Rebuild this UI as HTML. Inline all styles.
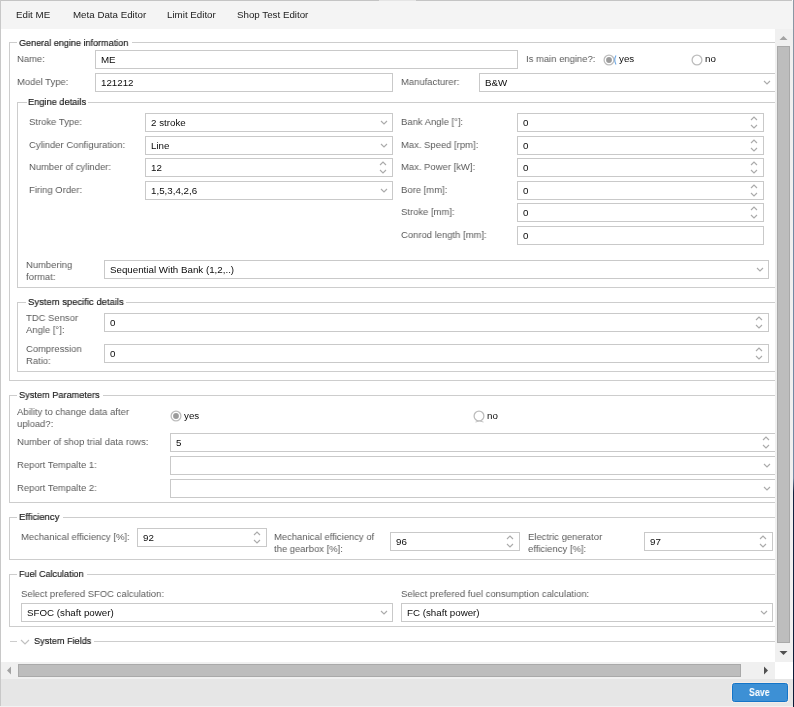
<!DOCTYPE html>
<html><head><meta charset="utf-8"><style>
html,body{margin:0;padding:0;width:794px;height:707px;overflow:hidden;background:#fff}
body{position:relative;font-family:"Liberation Sans",sans-serif;-webkit-font-smoothing:antialiased}
body>div,body>svg{position:absolute;box-sizing:border-box}
.t{white-space:nowrap;line-height:12px;transform-origin:0 0;will-change:transform;font-variant-ligatures:none}
</style></head><body>
<div style="left:0px;top:0px;width:794px;height:707px;background:#ffffff"></div>
<div style="left:0px;top:0px;width:792px;height:1px;background:#c4c4c4"></div>
<div style="left:379px;top:0px;width:37px;height:1px;background:#e4e4e4"></div>
<div style="left:0px;top:0px;width:1px;height:707px;background:#c8c8c8"></div>
<div style="left:793px;top:0px;width:1px;height:707px;background:linear-gradient(#8c98a4 0px,#7389a4 200px,#7389a4 478px,#12223f 492px,#0c1a36 707px)"></div>
<div style="left:1px;top:1px;width:792px;height:28px;background:#f4f4f4"></div>
<div class="t" style="left:16px;top:9.12px;color:#222;font-size:9.75px;font-weight:normal">Edit ME</div>
<div class="t" style="left:72.8px;top:9.12px;color:#222;font-size:9.75px;font-weight:normal">Meta Data Editor</div>
<div class="t" style="left:166.5px;top:9.12px;color:#222;font-size:9.75px;font-weight:normal">Limit Editor</div>
<div class="t" style="left:236.5px;top:9.12px;color:#222;font-size:9.75px;font-weight:normal">Shop Test Editor</div>
<div style="left:9px;top:42px;width:8px;height:1px;background:#cdcdcd"></div>
<div style="left:132px;top:42px;width:643px;height:1px;background:#cdcdcd"></div>
<div style="left:9px;top:42px;width:1px;height:339px;background:#cdcdcd"></div>
<div style="left:9px;top:380px;width:766px;height:1px;background:#cdcdcd"></div>
<div class="t" style="left:18.5px;top:36.62px;color:#1c1c1c;font-size:9.75px;font-weight:normal;transform:scaleX(0.929);-webkit-text-stroke:0.18px #1c1c1c">General engine information</div>
<div class="t" style="left:17px;top:52.62px;color:#5a5a5a;font-size:9.75px;font-weight:normal;transform:scaleX(0.97)">Name:</div>
<div style="left:95px;top:50px;width:423px;height:19px;border:1px solid #c9c9c9;background:#fff;"></div>
<div class="t" style="left:100.7px;top:53.62px;color:#0c0c0c;font-size:9.75px;font-weight:normal">ME</div>
<div class="t" style="left:526px;top:52.62px;color:#5a5a5a;font-size:9.75px;font-weight:normal;transform:scaleX(0.97)">Is main engine?:</div>
<svg style="left:602px;top:52.5px" width="14" height="14"><circle cx="7" cy="7" r="4.9" fill="#fff" stroke="#bdbdbd" stroke-width="1.3"/><circle cx="7" cy="7" r="2.9" fill="#9b9b9b"/></svg>
<svg style="left:612.5px;top:54.5px" width="4" height="10"><path d="M3 0.5 Q0.5 5 3 9.5" fill="none" stroke="#6aa6e4" stroke-width="1.1"/></svg>
<div class="t" style="left:619px;top:52.62px;color:#0c0c0c;font-size:9.75px;font-weight:normal">yes</div>
<svg style="left:689.5px;top:52.5px" width="14" height="14"><circle cx="7" cy="7" r="4.9" fill="#fff" stroke="#bdbdbd" stroke-width="1.3"/></svg>
<div class="t" style="left:705px;top:52.62px;color:#0c0c0c;font-size:9.75px;font-weight:normal">no</div>
<div class="t" style="left:17px;top:76.12px;color:#5a5a5a;font-size:9.75px;font-weight:normal;transform:scaleX(0.97)">Model Type:</div>
<div style="left:95px;top:73px;width:298px;height:19px;border:1px solid #c9c9c9;background:#fff;"></div>
<div class="t" style="left:100.7px;top:76.62px;color:#0c0c0c;font-size:9.75px;font-weight:normal">121212</div>
<div class="t" style="left:401px;top:76.12px;color:#5a5a5a;font-size:9.75px;font-weight:normal;transform:scaleX(0.97)">Manufacturer:</div>
<div style="left:479px;top:73px;width:297px;height:19px;border:1px solid #c9c9c9;background:#fff;"></div>
<div class="t" style="left:484.7px;top:76.62px;color:#0c0c0c;font-size:9.75px;font-weight:normal">B&amp;W</div>
<svg style="left:762.5px;top:80.0px" width="8" height="5"><path d="M1 1 L4.0 4 L7 1" fill="none" stroke="#ababab" stroke-width="1.15"/></svg>
<div style="left:17px;top:102px;width:10px;height:1px;background:#cdcdcd"></div>
<div style="left:88px;top:102px;width:687px;height:1px;background:#cdcdcd"></div>
<div style="left:17px;top:102px;width:1px;height:186px;background:#cdcdcd"></div>
<div style="left:17px;top:287px;width:758px;height:1px;background:#cdcdcd"></div>
<div class="t" style="left:27.5px;top:96.02px;color:#1c1c1c;font-size:9.75px;font-weight:normal;transform:scaleX(0.948);-webkit-text-stroke:0.18px #1c1c1c">Engine details</div>
<div class="t" style="left:29px;top:115.62px;color:#5a5a5a;font-size:9.75px;font-weight:normal;transform:scaleX(0.97)">Stroke Type:</div>
<div style="left:145px;top:113px;width:248px;height:19px;border:1px solid #c9c9c9;background:#fff;"></div>
<div class="t" style="left:150.7px;top:116.62px;color:#0c0c0c;font-size:9.75px;font-weight:normal">2 stroke</div>
<svg style="left:379.5px;top:120.0px" width="8" height="5"><path d="M1 1 L4.0 4 L7 1" fill="none" stroke="#ababab" stroke-width="1.15"/></svg>
<div class="t" style="left:29px;top:138.62px;color:#5a5a5a;font-size:9.75px;font-weight:normal;transform:scaleX(0.97)">Cylinder Configuration:</div>
<div style="left:145px;top:136px;width:248px;height:19px;border:1px solid #c9c9c9;background:#fff;"></div>
<div class="t" style="left:150.7px;top:139.62px;color:#0c0c0c;font-size:9.75px;font-weight:normal">Line</div>
<svg style="left:379.5px;top:143.0px" width="8" height="5"><path d="M1 1 L4.0 4 L7 1" fill="none" stroke="#ababab" stroke-width="1.15"/></svg>
<div class="t" style="left:29px;top:160.62px;color:#5a5a5a;font-size:9.75px;font-weight:normal;transform:scaleX(0.97)">Number of cylinder:</div>
<div style="left:145px;top:158px;width:248px;height:19px;border:1px solid #c9c9c9;background:#fff;"></div>
<div class="t" style="left:150.7px;top:161.62px;color:#0c0c0c;font-size:9.75px;font-weight:normal">12</div>
<svg style="left:379.0px;top:161.0px" width="8" height="5"><path d="M1 4 L4.0 1 L7 4" fill="none" stroke="#ababab" stroke-width="1.15"/></svg>
<svg style="left:379.0px;top:168.7px" width="8" height="5"><path d="M1 1 L4.0 4 L7 1" fill="none" stroke="#ababab" stroke-width="1.15"/></svg>
<div class="t" style="left:29px;top:183.62px;color:#5a5a5a;font-size:9.75px;font-weight:normal;transform:scaleX(0.97)">Firing Order:</div>
<div style="left:145px;top:181px;width:248px;height:19px;border:1px solid #c9c9c9;background:#fff;"></div>
<div class="t" style="left:150.7px;top:184.62px;color:#0c0c0c;font-size:9.75px;font-weight:normal">1,5,3,4,2,6</div>
<svg style="left:379.5px;top:188.0px" width="8" height="5"><path d="M1 1 L4.0 4 L7 1" fill="none" stroke="#ababab" stroke-width="1.15"/></svg>
<div class="t" style="left:401px;top:115.62px;color:#5a5a5a;font-size:9.75px;font-weight:normal;transform:scaleX(0.97)">Bank Angle [°]:</div>
<div style="left:517px;top:113px;width:247px;height:19px;border:1px solid #c9c9c9;background:#fff;"></div>
<div class="t" style="left:522.7px;top:116.62px;color:#0c0c0c;font-size:9.75px;font-weight:normal">0</div>
<svg style="left:750.0px;top:116.0px" width="8" height="5"><path d="M1 4 L4.0 1 L7 4" fill="none" stroke="#ababab" stroke-width="1.15"/></svg>
<svg style="left:750.0px;top:123.7px" width="8" height="5"><path d="M1 1 L4.0 4 L7 1" fill="none" stroke="#ababab" stroke-width="1.15"/></svg>
<div class="t" style="left:401px;top:138.62px;color:#5a5a5a;font-size:9.75px;font-weight:normal;transform:scaleX(0.97)">Max. Speed [rpm]:</div>
<div style="left:517px;top:136px;width:247px;height:19px;border:1px solid #c9c9c9;background:#fff;"></div>
<div class="t" style="left:522.7px;top:139.62px;color:#0c0c0c;font-size:9.75px;font-weight:normal">0</div>
<svg style="left:750.0px;top:139.0px" width="8" height="5"><path d="M1 4 L4.0 1 L7 4" fill="none" stroke="#ababab" stroke-width="1.15"/></svg>
<svg style="left:750.0px;top:146.7px" width="8" height="5"><path d="M1 1 L4.0 4 L7 1" fill="none" stroke="#ababab" stroke-width="1.15"/></svg>
<div class="t" style="left:401px;top:160.62px;color:#5a5a5a;font-size:9.75px;font-weight:normal;transform:scaleX(0.97)">Max. Power [kW]:</div>
<div style="left:517px;top:158px;width:247px;height:19px;border:1px solid #c9c9c9;background:#fff;"></div>
<div class="t" style="left:522.7px;top:161.62px;color:#0c0c0c;font-size:9.75px;font-weight:normal">0</div>
<svg style="left:750.0px;top:161.0px" width="8" height="5"><path d="M1 4 L4.0 1 L7 4" fill="none" stroke="#ababab" stroke-width="1.15"/></svg>
<svg style="left:750.0px;top:168.7px" width="8" height="5"><path d="M1 1 L4.0 4 L7 1" fill="none" stroke="#ababab" stroke-width="1.15"/></svg>
<div class="t" style="left:401px;top:183.62px;color:#5a5a5a;font-size:9.75px;font-weight:normal;transform:scaleX(0.97)">Bore [mm]:</div>
<div style="left:517px;top:181px;width:247px;height:19px;border:1px solid #c9c9c9;background:#fff;"></div>
<div class="t" style="left:522.7px;top:184.62px;color:#0c0c0c;font-size:9.75px;font-weight:normal">0</div>
<svg style="left:750.0px;top:184.0px" width="8" height="5"><path d="M1 4 L4.0 1 L7 4" fill="none" stroke="#ababab" stroke-width="1.15"/></svg>
<svg style="left:750.0px;top:191.7px" width="8" height="5"><path d="M1 1 L4.0 4 L7 1" fill="none" stroke="#ababab" stroke-width="1.15"/></svg>
<div class="t" style="left:401px;top:205.62px;color:#5a5a5a;font-size:9.75px;font-weight:normal;transform:scaleX(0.97)">Stroke [mm]:</div>
<div style="left:517px;top:203px;width:247px;height:19px;border:1px solid #c9c9c9;background:#fff;"></div>
<div class="t" style="left:522.7px;top:206.62px;color:#0c0c0c;font-size:9.75px;font-weight:normal">0</div>
<svg style="left:750.0px;top:206.0px" width="8" height="5"><path d="M1 4 L4.0 1 L7 4" fill="none" stroke="#ababab" stroke-width="1.15"/></svg>
<svg style="left:750.0px;top:213.7px" width="8" height="5"><path d="M1 1 L4.0 4 L7 1" fill="none" stroke="#ababab" stroke-width="1.15"/></svg>
<div class="t" style="left:401px;top:228.62px;color:#5a5a5a;font-size:9.75px;font-weight:normal;transform:scaleX(0.97)">Conrod length [mm]:</div>
<div style="left:517px;top:226px;width:247px;height:19px;border:1px solid #c9c9c9;background:#fff;"></div>
<div class="t" style="left:522.7px;top:229.62px;color:#0c0c0c;font-size:9.75px;font-weight:normal">0</div>
<div class="t" style="left:26px;top:258.62px;color:#5a5a5a;font-size:9.75px;font-weight:normal;transform:scaleX(0.97)">Numbering</div>
<div class="t" style="left:26px;top:270.62px;color:#5a5a5a;font-size:9.75px;font-weight:normal;transform:scaleX(0.97)">format:</div>
<div style="left:104px;top:260px;width:665px;height:19px;border:1px solid #c9c9c9;background:#fff;"></div>
<div class="t" style="left:109.7px;top:263.62px;color:#0c0c0c;font-size:9.75px;font-weight:normal">Sequential With Bank (1,2,..)</div>
<svg style="left:755.5px;top:267.0px" width="8" height="5"><path d="M1 1 L4.0 4 L7 1" fill="none" stroke="#ababab" stroke-width="1.15"/></svg>
<div style="left:17px;top:302px;width:9px;height:1px;background:#cdcdcd"></div>
<div style="left:126px;top:302px;width:649px;height:1px;background:#cdcdcd"></div>
<div style="left:17px;top:302px;width:1px;height:70px;background:#cdcdcd"></div>
<div style="left:17px;top:371px;width:758px;height:1px;background:#cdcdcd"></div>
<div class="t" style="left:27.5px;top:296.02px;color:#1c1c1c;font-size:9.75px;font-weight:normal;transform:scaleX(0.971);-webkit-text-stroke:0.18px #1c1c1c">System specific details</div>
<div class="t" style="left:26px;top:311.62px;color:#5a5a5a;font-size:9.75px;font-weight:normal;transform:scaleX(0.97)">TDC Sensor</div>
<div class="t" style="left:26px;top:324.12px;color:#5a5a5a;font-size:9.75px;font-weight:normal;transform:scaleX(0.97)">Angle [°]:</div>
<div style="left:104px;top:313px;width:665px;height:19px;border:1px solid #c9c9c9;background:#fff;"></div>
<div class="t" style="left:109.7px;top:316.62px;color:#0c0c0c;font-size:9.75px;font-weight:normal">0</div>
<svg style="left:755.0px;top:316.0px" width="8" height="5"><path d="M1 4 L4.0 1 L7 4" fill="none" stroke="#ababab" stroke-width="1.15"/></svg>
<svg style="left:755.0px;top:323.7px" width="8" height="5"><path d="M1 1 L4.0 4 L7 1" fill="none" stroke="#ababab" stroke-width="1.15"/></svg>
<div class="t" style="left:26px;top:343.12px;color:#5a5a5a;font-size:9.75px;font-weight:normal;transform:scaleX(0.97)">Compression</div>
<div class="t" style="left:26px;top:355.12px;color:#5a5a5a;font-size:9.75px;font-weight:normal;transform:scaleX(0.97)">Ratio:</div>
<div style="left:104px;top:344px;width:665px;height:19px;border:1px solid #c9c9c9;background:#fff;"></div>
<div class="t" style="left:109.7px;top:347.62px;color:#0c0c0c;font-size:9.75px;font-weight:normal">0</div>
<svg style="left:755.0px;top:347.0px" width="8" height="5"><path d="M1 4 L4.0 1 L7 4" fill="none" stroke="#ababab" stroke-width="1.15"/></svg>
<svg style="left:755.0px;top:354.7px" width="8" height="5"><path d="M1 1 L4.0 4 L7 1" fill="none" stroke="#ababab" stroke-width="1.15"/></svg>
<div style="left:9px;top:395px;width:8px;height:1px;background:#cdcdcd"></div>
<div style="left:103px;top:395px;width:672px;height:1px;background:#cdcdcd"></div>
<div style="left:9px;top:395px;width:1px;height:108px;background:#cdcdcd"></div>
<div style="left:9px;top:502px;width:766px;height:1px;background:#cdcdcd"></div>
<div class="t" style="left:18.5px;top:389.02px;color:#1c1c1c;font-size:9.75px;font-weight:normal;transform:scaleX(0.942);-webkit-text-stroke:0.18px #1c1c1c">System Parameters</div>
<div class="t" style="left:17px;top:406.12px;color:#5a5a5a;font-size:9.75px;font-weight:normal;transform:scaleX(0.97)">Ability to change data after</div>
<div class="t" style="left:17px;top:417.62px;color:#5a5a5a;font-size:9.75px;font-weight:normal;transform:scaleX(0.97)">upload?:</div>
<svg style="left:168.5px;top:408.5px" width="14" height="14"><circle cx="7" cy="7" r="4.9" fill="#fff" stroke="#bdbdbd" stroke-width="1.3"/><circle cx="7" cy="7" r="2.9" fill="#9b9b9b"/></svg>
<div class="t" style="left:184px;top:409.62px;color:#0c0c0c;font-size:9.75px;font-weight:normal">yes</div>
<svg style="left:471.5px;top:408.5px" width="14" height="14"><circle cx="7" cy="7" r="4.9" fill="#fff" stroke="#bdbdbd" stroke-width="1.3"/></svg>
<svg style="left:474.5px;top:419.5px" width="9" height="3"><path d="M0.5 2 Q4.5 0 8.5 2" fill="none" stroke="#c4c4c4" stroke-width="1"/></svg>
<div class="t" style="left:487px;top:409.62px;color:#0c0c0c;font-size:9.75px;font-weight:normal">no</div>
<div class="t" style="left:17px;top:436.12px;color:#5a5a5a;font-size:9.75px;font-weight:normal;transform:scaleX(0.97)">Number of shop trial data rows:</div>
<div style="left:170px;top:433px;width:606px;height:19px;border:1px solid #c9c9c9;background:#fff;"></div>
<div class="t" style="left:175.7px;top:436.62px;color:#0c0c0c;font-size:9.75px;font-weight:normal">5</div>
<svg style="left:762.0px;top:436.0px" width="8" height="5"><path d="M1 4 L4.0 1 L7 4" fill="none" stroke="#ababab" stroke-width="1.15"/></svg>
<svg style="left:762.0px;top:443.7px" width="8" height="5"><path d="M1 1 L4.0 4 L7 1" fill="none" stroke="#ababab" stroke-width="1.15"/></svg>
<div class="t" style="left:17px;top:459.12px;color:#5a5a5a;font-size:9.75px;font-weight:normal;transform:scaleX(0.97)">Report Tempalte 1:</div>
<div style="left:170px;top:456px;width:606px;height:19px;border:1px solid #c9c9c9;background:#fff;"></div>
<svg style="left:762.5px;top:463.0px" width="8" height="5"><path d="M1 1 L4.0 4 L7 1" fill="none" stroke="#ababab" stroke-width="1.15"/></svg>
<div class="t" style="left:17px;top:482.12px;color:#5a5a5a;font-size:9.75px;font-weight:normal;transform:scaleX(0.97)">Report Tempalte 2:</div>
<div style="left:170px;top:479px;width:606px;height:19px;border:1px solid #c9c9c9;background:#fff;"></div>
<svg style="left:762.5px;top:486.0px" width="8" height="5"><path d="M1 1 L4.0 4 L7 1" fill="none" stroke="#ababab" stroke-width="1.15"/></svg>
<div style="left:9px;top:517px;width:8px;height:1px;background:#cdcdcd"></div>
<div style="left:63px;top:517px;width:712px;height:1px;background:#cdcdcd"></div>
<div style="left:9px;top:517px;width:1px;height:43px;background:#cdcdcd"></div>
<div style="left:9px;top:559px;width:766px;height:1px;background:#cdcdcd"></div>
<div class="t" style="left:18.5px;top:511.02px;color:#1c1c1c;font-size:9.75px;font-weight:normal;transform:scaleX(0.971);-webkit-text-stroke:0.18px #1c1c1c">Efficiency</div>
<div class="t" style="left:20.8px;top:531.12px;color:#5a5a5a;font-size:9.75px;font-weight:normal;transform:scaleX(0.97)">Mechanical efficiency [%]:</div>
<div style="left:137px;top:528px;width:130px;height:19px;border:1px solid #c9c9c9;background:#fff;"></div>
<div class="t" style="left:142.7px;top:531.62px;color:#0c0c0c;font-size:9.75px;font-weight:normal">92</div>
<svg style="left:253.0px;top:531.0px" width="8" height="5"><path d="M1 4 L4.0 1 L7 4" fill="none" stroke="#ababab" stroke-width="1.15"/></svg>
<svg style="left:253.0px;top:538.7px" width="8" height="5"><path d="M1 1 L4.0 4 L7 1" fill="none" stroke="#ababab" stroke-width="1.15"/></svg>
<div class="t" style="left:274px;top:530.62px;color:#5a5a5a;font-size:9.75px;font-weight:normal;transform:scaleX(0.97)">Mechanical efficiency of</div>
<div class="t" style="left:274px;top:542.62px;color:#5a5a5a;font-size:9.75px;font-weight:normal;transform:scaleX(0.97)">the gearbox [%]:</div>
<div style="left:390px;top:532px;width:130px;height:19px;border:1px solid #c9c9c9;background:#fff;"></div>
<div class="t" style="left:395.7px;top:535.62px;color:#0c0c0c;font-size:9.75px;font-weight:normal">96</div>
<svg style="left:506.0px;top:535.0px" width="8" height="5"><path d="M1 4 L4.0 1 L7 4" fill="none" stroke="#ababab" stroke-width="1.15"/></svg>
<svg style="left:506.0px;top:542.7px" width="8" height="5"><path d="M1 1 L4.0 4 L7 1" fill="none" stroke="#ababab" stroke-width="1.15"/></svg>
<div class="t" style="left:528px;top:530.62px;color:#5a5a5a;font-size:9.75px;font-weight:normal;transform:scaleX(0.97)">Electric generator</div>
<div class="t" style="left:528px;top:542.62px;color:#5a5a5a;font-size:9.75px;font-weight:normal;transform:scaleX(0.97)">efficiency [%]:</div>
<div style="left:644px;top:532px;width:129px;height:19px;border:1px solid #c9c9c9;background:#fff;"></div>
<div class="t" style="left:649.7px;top:535.62px;color:#0c0c0c;font-size:9.75px;font-weight:normal">97</div>
<svg style="left:759.0px;top:535.0px" width="8" height="5"><path d="M1 4 L4.0 1 L7 4" fill="none" stroke="#ababab" stroke-width="1.15"/></svg>
<svg style="left:759.0px;top:542.7px" width="8" height="5"><path d="M1 1 L4.0 4 L7 1" fill="none" stroke="#ababab" stroke-width="1.15"/></svg>
<div style="left:9px;top:574px;width:8px;height:1px;background:#cdcdcd"></div>
<div style="left:87px;top:574px;width:688px;height:1px;background:#cdcdcd"></div>
<div style="left:9px;top:574px;width:1px;height:53px;background:#cdcdcd"></div>
<div style="left:9px;top:626px;width:766px;height:1px;background:#cdcdcd"></div>
<div class="t" style="left:18.5px;top:568.02px;color:#1c1c1c;font-size:9.75px;font-weight:normal;transform:scaleX(0.923);-webkit-text-stroke:0.18px #1c1c1c">Fuel Calculation</div>
<div class="t" style="left:21px;top:588.12px;color:#5a5a5a;font-size:9.75px;font-weight:normal;transform:scaleX(0.97)">Select prefered SFOC calculation:</div>
<div style="left:21px;top:603px;width:372px;height:19px;border:1px solid #c9c9c9;background:#fff;"></div>
<div class="t" style="left:26.7px;top:606.62px;color:#0c0c0c;font-size:9.75px;font-weight:normal">SFOC (shaft power)</div>
<svg style="left:379.5px;top:610.0px" width="8" height="5"><path d="M1 1 L4.0 4 L7 1" fill="none" stroke="#ababab" stroke-width="1.15"/></svg>
<div class="t" style="left:401px;top:588.12px;color:#5a5a5a;font-size:9.75px;font-weight:normal;transform:scaleX(0.97)">Select prefered fuel consumption calculation:</div>
<div style="left:401px;top:603px;width:372px;height:19px;border:1px solid #c9c9c9;background:#fff;"></div>
<div class="t" style="left:406.7px;top:606.62px;color:#0c0c0c;font-size:9.75px;font-weight:normal">FC (shaft power)</div>
<svg style="left:759.5px;top:610.0px" width="8" height="5"><path d="M1 1 L4.0 4 L7 1" fill="none" stroke="#ababab" stroke-width="1.15"/></svg>
<div style="left:10px;top:641px;width:7px;height:1px;background:#cdcdcd"></div>
<svg style="left:19.5px;top:638.5px" width="10" height="6"><path d="M1 1 L5.0 5 L9 1" fill="none" stroke="#c0c0c0" stroke-width="1.15"/></svg>
<div class="t" style="left:34px;top:634.62px;color:#1c1c1c;font-size:9.75px;font-weight:normal;transform:scaleX(0.936);-webkit-text-stroke:0.18px #1c1c1c">System Fields</div>
<div style="left:94px;top:641px;width:681px;height:1px;background:#cdcdcd"></div>
<div style="left:775px;top:29px;width:18px;height:633px;background:#f0f0f0"></div>
<svg style="left:779px;top:35px" width="9" height="6"><path d="M0.5 5 L4.5 1 L8.5 5 Z" fill="#a3a3a3"/></svg>
<div style="left:777px;top:46px;width:13px;height:597px;border:1px solid #a9a9a9;background:#bdbdbd;"></div>
<svg style="left:779px;top:650px" width="9" height="6"><path d="M0.5 1 L4.5 5 L8.5 1 Z" fill="#505050"/></svg>
<div style="left:1px;top:662px;width:774px;height:17px;background:#f0f0f0"></div>
<svg style="left:6px;top:666px" width="6" height="9"><path d="M5 0.5 L1 4.5 L5 8.5 Z" fill="#a3a3a3"/></svg>
<div style="left:18px;top:664px;width:723px;height:13px;border:1px solid #a9a9a9;background:#bdbdbd;"></div>
<svg style="left:763px;top:666px" width="6" height="9"><path d="M1 0.5 L5 4.5 L1 8.5 Z" fill="#505050"/></svg>
<div style="left:775px;top:662px;width:18px;height:17px;background:#ffffff"></div>
<div style="left:1px;top:679px;width:792px;height:27px;background:#e6e6e6"></div>
<div style="left:0px;top:706px;width:793px;height:1px;background:#f2f2f2"></div>
<div style="left:732px;top:683px;width:56px;height:19px;border:1px solid #1475c8;border-radius:2.5px;background:#3d90d5;box-shadow:0 0 0 1px #f3ece8"></div>
<div class="t" style="left:749px;top:686.53px;color:#fff;font-size:10px;font-weight:bold;transform:scaleX(0.885)">Save</div>
</body></html>
